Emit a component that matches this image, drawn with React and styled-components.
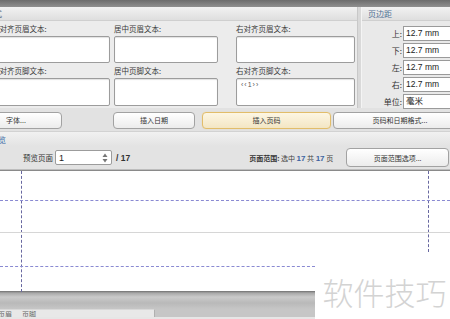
import styled, { createGlobalStyle } from "styled-components";

const Global = createGlobalStyle`
	html, body {
		margin: 0;
		padding: 0;
		background: #ffffff;
	}
	* {
		box-sizing: border-box;
	}
`;

const FONT = `"Noto Sans CJK SC", "Liberation Sans", sans-serif`;

export default function App() {
	return (
		<Screen>
			<Global />
			<TopStrip />
			<HeaderArea>
				<LeftGroup>
					<TitleBar>
						<TitleText>页眉和页脚格式</TitleText>
					</TitleBar>
					<FieldGrid>
						<Field $w={124}>
							<Label $pl={6}>左对齐页眉文本:</Label>
							<TextBox $h={27} />
						</Field>
						<Field $w={104} $ml={4}>
							<Label>居中页眉文本:</Label>
							<TextBox $h={27} />
						</Field>
						<Field $w={119} $ml={18}>
							<Label>右对齐页眉文本:</Label>
							<TextBox $h={27} />
						</Field>
						<Field $w={124}>
							<Label $pl={6}>左对齐页脚文本:</Label>
							<TextBox $h={28} />
						</Field>
						<Field $w={104} $ml={4}>
							<Label>居中页脚文本:</Label>
							<TextBox $h={28} />
						</Field>
						<Field $w={119} $ml={18}>
							<Label>右对齐页脚文本:</Label>
							<TextBox $h={28}>‹‹1››</TextBox>
						</Field>
					</FieldGrid>
				</LeftGroup>
				<Split />
				<RightGroup>
					<TitleBar>
						<TitleText $blue>页边距</TitleText>
					</TitleBar>
					<MarginList>
						<MarginRow>
							<MarginLabel>上:</MarginLabel>
							<MarginInput>12.7 mm</MarginInput>
						</MarginRow>
						<MarginRow>
							<MarginLabel>下:</MarginLabel>
							<MarginInput>12.7 mm</MarginInput>
						</MarginRow>
						<MarginRow>
							<MarginLabel>左:</MarginLabel>
							<MarginInput>12.7 mm</MarginInput>
						</MarginRow>
						<MarginRow>
							<MarginLabel>右:</MarginLabel>
							<MarginInput>12.7 mm</MarginInput>
						</MarginRow>
						<MarginRow>
							<MarginLabel>单位:</MarginLabel>
							<MarginInput>毫米</MarginInput>
						</MarginRow>
					</MarginList>
				</RightGroup>
			</HeaderArea>
			<ButtonRow>
				<Button $w={92} $ml={-30}>字体...</Button>
				<Button $w={82} $ml={51}>插入日期</Button>
				<Button $w={129} $ml={7} $active>插入页码</Button>
				<Button $w={134} $ml={2}>页码和日期格式...</Button>
			</ButtonRow>
			<SectionBar>
				<SectionText>预览</SectionText>
			</SectionBar>
			<PreviewControls>
				<PageLabel>预览页面</PageLabel>
				<Spinner>
					<span>1</span>
					<SpinArrows>
						<svg width="6" height="10" viewBox="0 0 6 10">
							<path d="M3 0.5 L5.5 4 L0.5 4 Z" fill="#777" />
							<path d="M3 9.5 L5.5 6 L0.5 6 Z" fill="#777" />
						</svg>
					</SpinArrows>
				</Spinner>
				<TotalPages>/ 17</TotalPages>
				<Range>
					<b>页面范围:</b> 选中 <Num>17</Num> 共 <Num>17</Num> 页
				</Range>
				<Button $w={103} $ml={13} $h={19}>
					页面范围选项...
				</Button>
			</PreviewControls>
			<Preview>
				<VLine $x={21} $top={0} $h={121} />
				<VLine $x={428} $top={0} $h={81} />
				<HLine $y={29} $w={450} />
				<SolidLine $y={61} />
				<HLine $y={95} $w={315} />
			</Preview>
			<BottomBar>
				<TabStrip>
					<Tab>
						<TabText>页眉</TabText>
						<TabText>页脚</TabText>
					</Tab>
				</TabStrip>
			</BottomBar>
			<Watermark>软件技巧</Watermark>
		</Screen>
	);
}

const Screen = styled.div`
	position: relative;
	width: 450px;
	height: 319px;
	overflow: hidden;
	background: #e6e6e6;
	font-family: ${FONT};
	font-size: 7.5px;
	color: #333;
`;

const TopStrip = styled.div`
	height: 7px;
	background: linear-gradient(#6c6c6c, #8f8f8f);
`;

const HeaderArea = styled.div`
	display: flex;
	height: 101px;
`;

const LeftGroup = styled.div`
	width: 371px;
	margin-left: -14px;
	background: #ececec;
	flex-shrink: 0;
`;

const Split = styled.div`
	width: 5px;
	flex-shrink: 0;
	background: #d9d9d9;
	border-left: 1px solid #c8c8c8;
	border-right: 1px solid #f4f4f4;
`;

const RightGroup = styled.div`
	flex: 1;
	background: #e9e9e9;
`;

const TitleBar = styled.div`
	height: 14px;
	display: flex;
	align-items: center;
	padding-left: 6px;
	background: linear-gradient(#f2f2f2, #dedede);
	border-bottom: 1px solid #cfcfcf;
	overflow: hidden;
`;

const TitleText = styled.span`
	font-size: 8px;
	color: ${(p) => (p.$blue ? "#4f6f94" : "#5a6a80")};
	white-space: nowrap;
	margin-left: ${(p) => (p.$blue ? "0" : "-46px")};
`;

const FieldGrid = styled.div`
	display: flex;
	flex-wrap: wrap;
	width: 371px;
`;

const Field = styled.div`
	display: flex;
	flex-direction: column;
	width: ${(p) => p.$w}px;
	margin-left: ${(p) => p.$ml || 0}px;
`;

const Label = styled.div`
	height: 15px;
	line-height: 14px;
	padding-top: 1px;
	padding-left: ${(p) => p.$pl || 0}px;
	font-size: 7.5px;
	color: #3a3a3a;
	white-space: nowrap;
`;

const TextBox = styled.div`
	height: ${(p) => p.$h}px;
	background: #ffffff;
	border: 1px solid #9c9c9c;
	border-radius: 2px;
	box-shadow: inset 0 1px 1px rgba(0, 0, 0, 0.12);
	font-family: "Liberation Sans", sans-serif;
	font-size: 7px;
	letter-spacing: 1px;
	padding: 2px 4px;
	color: #555;
`;

const MarginList = styled.div`
	display: flex;
	flex-direction: column;
	gap: 1px;
	padding-top: 4px;
`;

const MarginRow = styled.div`
	display: flex;
	align-items: center;
	height: 16px;
`;

const MarginLabel = styled.span`
	width: 41px;
	text-align: right;
	padding-right: 1px;
	font-size: 8px;
	color: #333;
`;

const MarginInput = styled.div`
	flex: 1;
	height: 15px;
	line-height: 13px;
	background: #ffffff;
	border: 1px solid #9a9a9a;
	border-right: none;
	padding-left: 2px;
	font-family: "Liberation Sans", "Noto Sans CJK SC", sans-serif;
	font-size: 8.5px;
	color: #222;
`;

const ButtonRow = styled.div`
	display: flex;
	align-items: center;
	height: 23px;
	padding-top: 1px;
	background: #e2e2e2;
`;

const Button = styled.div`
	flex-shrink: 0;
	display: flex;
	align-items: center;
	justify-content: center;
	width: ${(p) => p.$w}px;
	height: ${(p) => p.$h || 17}px;
	margin-left: ${(p) => p.$ml || 0}px;
	border-radius: 4px;
	border: 1px solid ${(p) => (p.$active ? "#e2bd6a" : "#a2a2a2")};
	background: ${(p) =>
		p.$active
			? "linear-gradient(#fdf6e3, #f3e6c4)"
			: "linear-gradient(#ffffff, #ececec)"};
	box-shadow: ${(p) => (p.$active ? "0 0 1px #f0d090" : "none")};
	font-size: 7px;
	color: #333;
	white-space: nowrap;
`;

const SectionBar = styled.div`
	height: 15px;
	display: flex;
	align-items: center;
	background: linear-gradient(#f1f1f1, #e3e3e3);
	border-top: 1px solid #d2d2d2;
	overflow: hidden;
`;

const SectionText = styled.span`
	margin-left: -10px;
	color: #3f6ea8;
	font-size: 8px;
	white-space: nowrap;
`;

const PreviewControls = styled.div`
	display: flex;
	align-items: center;
	height: 24px;
	background: #e3e3e3;
	border-bottom: 1px solid #bdbdbd;
	white-space: nowrap;

	& > * {
		flex-shrink: 0;
	}
`;

const PageLabel = styled.span`
	margin-left: 23px;
	margin-right: 2px;
	font-size: 7.5px;
	color: #333;
`;

const Spinner = styled.div`
	display: flex;
	align-items: center;
	justify-content: space-between;
	width: 57px;
	height: 15px;
	background: #ffffff;
	border: 1px solid #9c9c9c;
	border-radius: 2px;
	padding: 0 3px;
	font-family: "Liberation Sans", sans-serif;
	font-size: 9px;
	color: #222;
`;

const SpinArrows = styled.span`
	display: flex;
	align-items: center;
`;

const TotalPages = styled.span`
	margin-left: 4px;
	font-family: "Liberation Sans", sans-serif;
	font-weight: bold;
	font-size: 8.5px;
	color: #333;
`;

const Range = styled.span`
	margin-left: 119px;
	font-size: 7px;
	color: #444;

	b {
		color: #333;
	}
`;

const Num = styled.span`
	font-family: "Liberation Sans", sans-serif;
	font-weight: bold;
	font-size: 8px;
	color: #3b62a0;
`;

const Preview = styled.div`
	position: relative;
	height: 121px;
	background: #ffffff;
	border-top: 1px solid #8a8a8a;
`;

const VLine = styled.div`
	position: absolute;
	left: ${(p) => p.$x}px;
	top: ${(p) => p.$top}px;
	height: ${(p) => p.$h}px;
	width: 0;
	border-left: 1px dashed #6868a0;
`;

const HLine = styled.div`
	position: absolute;
	left: 0;
	top: ${(p) => p.$y}px;
	width: ${(p) => p.$w}px;
	height: 0;
	border-top: 1px dashed #8a8ad2;
`;

const SolidLine = styled.div`
	position: absolute;
	left: 0;
	right: 0;
	top: ${(p) => p.$y}px;
	height: 1px;
	background: #d6d6d6;
`;

const BottomBar = styled.div`
	height: 26px;
	display: flex;
	flex-direction: column;
	justify-content: flex-end;
	background: linear-gradient(#6f6f6f 0px, #a8a8a8 2px, #cacaca 6px, #b9b9b9 12px, #c6c6c6 18px);
`;

const TabStrip = styled.div`
	height: 8px;
	display: flex;
`;

const Tab = styled.div`
	width: 155px;
	display: flex;
	gap: 12px;
	background: #e8e8e8;
	border-right: 1px solid #b0b0b0;
	border-top: 1px solid #d8d8d8;
	overflow: hidden;
`;

const TabText = styled.span`
	font-size: 7px;
	line-height: 9px;
	color: #666;
	margin-left: -2px;
`;

const Watermark = styled.div`
	position: absolute;
	left: 315px;
	top: 264px;
	width: 135px;
	height: 55px;
	background: #ffffff;
	display: flex;
	align-items: center;
	justify-content: center;
	padding-left: 4px;
	font-family: "Noto Sans CJK SC", sans-serif;
	font-size: 31px;
	color: #d3d3d3;
	font-weight: 300;
`;
